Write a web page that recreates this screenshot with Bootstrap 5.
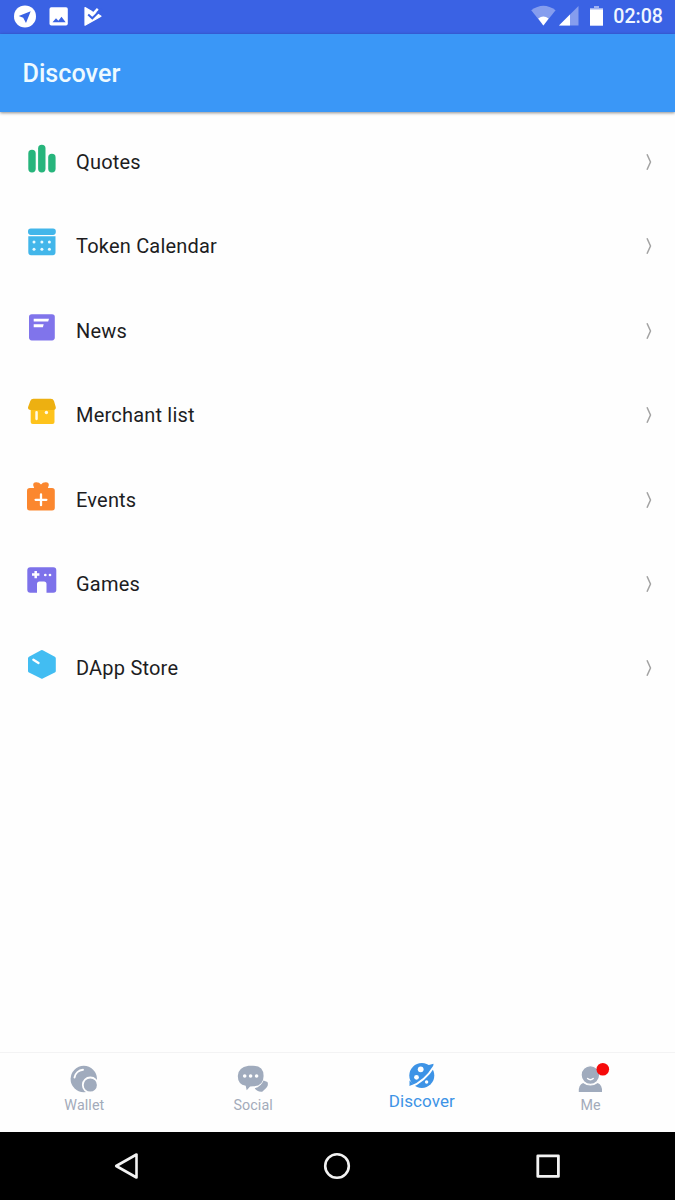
<!DOCTYPE html>
<html lang="en">
<head>
<meta charset="utf-8">
<meta name="viewport" content="width=device-width, initial-scale=1">
<title>Discover</title>
<link href="https://cdn.jsdelivr.net/npm/bootstrap@5.3.0/dist/css/bootstrap.min.css" rel="stylesheet">
<style>
  body { font-family: Roboto, "Liberation Sans", sans-serif; background: #fefefe; height: 1200px; overflow: hidden; }
  svg { display: block; flex: none; }
  .status-bar { height: 34px; background: #3a62e4; color: #fff; }
  .clock { font-size: 19.6px; font-weight: 500; line-height: 36px; margin-left: 9px; color: #f0f6ff; }
  .app-bar { height: 78px; background: #3a97f7; box-shadow: 0 1px 3px rgba(0,0,0,.45); padding: 2px 22.5px 0; }
  .app-bar h1 { font-size: 25.2px; font-weight: 500; color: #eefaff; line-height: 1; }
  .menu-list { padding-top: 7.8px; }
  .menu-row { height: 84.4px; padding: 0 20px 0 24px; gap: 16px; color: #1d1d1f; font-size: 20px; letter-spacing: .2px; text-decoration: none; }
  .tab-bar { height: 80px; border-top: 1px solid #f3f3f4; background: #fefefe; }
  .tab-link { color: #a3abba; font-size: 14.3px; line-height: 16px; padding-top: 10px; text-decoration: none; letter-spacing: .1px; }
  .tab-link.current { color: #3d93e6; font-size: 17px; line-height: 20px; padding-top: 7px; }
  .system-bar { height: 68px; background: #000; padding: 0 22px 0 20px; }
</style>
</head>
<body class="d-flex flex-column">
  <header class="flex-shrink-0">
    <div class="status-bar d-flex align-items-center justify-content-between">
      <svg width="120" height="34" viewBox="0 0 120 34" fill="#fff">
        <circle cx="25" cy="16.4" r="11"/>
        <path d="M30.7 11.3 18.7 16l4.500 1.700 2.800 5.200z" fill="#3a62e4"/>
        <rect x="49.500" y="7.300" width="18.300" height="18.300" rx="1.800"/>
        <path d="M52.500 22.300 56 18.200l2.400 2.500 3.100-4 4.200 5.600z" fill="#3a62e4"/>
        <path d="M85 7.500 91.500 11.200 93.500 13.200 96.500 13.200 101 16.200 85 25.200z" stroke="#fff" stroke-width="1.200" stroke-linejoin="round"/>
        <path d="M88.200 14.600 92.300 18.300 101.600 9" fill="none" stroke="#3a62e4" stroke-width="2"/>
        <path d="M90.200 12.200 92.600 14.400 97.800 8.900" fill="none" stroke="#fff" stroke-width="2.400"/>
      </svg>
      <div class="d-flex" style="padding-right:12px">
        <svg width="74" height="34" viewBox="530 0 74 34" fill="#fff">
          <path d="M531.200 11.200q12.200-9 24.400 0L543.400 26.500z" opacity=".38"/>
          <path d="M538.200 19.500q5.200-3.800 10.400 0l-5.200 7z"/>
          <path d="M578.500 7v19.500H559z" opacity=".38"/><path d="M570 15.500v11H559z"/>
          <path d="M594 7h5v2h4v4h-13V9h4z" opacity=".5"/><path d="M590 10.500h13v16.200h-13z"/>
        </svg>
        <span class="clock">02:08</span>
      </div>
    </div>
    <div class="app-bar d-flex align-items-center"><h1 class="m-0">Discover</h1></div>
  </header>

  <main class="menu-list flex-grow-1">
    <a class="menu-row d-flex align-items-center">
      <svg width="36" height="36" viewBox="0 0 36 36" fill="#27b57c"><rect x="4.300" y="5.700" width="7.400" height="22.700" rx="3.700"/><rect x="14.100" y=".8" width="7.400" height="27.600" rx="3.700"/><rect x="24.200" y="9.800" width="7.400" height="18.600" rx="3.700"/></svg>
      <span class="flex-grow-1">Quotes</span>
      <svg width="12" height="24" viewBox="0 0 12 24" fill="none" stroke="#a2a2a2" stroke-width="1.500"><path d="M4 4.200 7.500 12 4 19.800"/></svg>
    </a>
    <a class="menu-row d-flex align-items-center">
      <svg width="36" height="36" viewBox="0 0 36 36" fill="#42b6ea"><rect x="4" y=".6" width="27.800" height="6.300" rx="2.800"/><path d="M4.300 8.300h27.200v16a3 3 0 0 1-3 3H7.300a3 3 0 0 1-3-3z"/><g fill="#e8faff"><circle cx="10" cy="14" r="1.500"/><circle cx="17.900" cy="14" r="1.500"/><circle cx="25.400" cy="14" r="1.500"/><circle cx="10" cy="21.300" r="1.500"/><circle cx="17.900" cy="21.300" r="1.500"/><circle cx="25.400" cy="21.300" r="1.500"/></g></svg>
      <span class="flex-grow-1">Token Calendar</span>
      <svg width="12" height="24" viewBox="0 0 12 24" fill="none" stroke="#a2a2a2" stroke-width="1.500"><path d="M4 4.200 7.500 12 4 19.800"/></svg>
    </a>
    <a class="menu-row d-flex align-items-center">
      <svg width="36" height="36" viewBox="0 0 36 36" fill="#8074eb"><rect x="5" y="1.200" width="25.800" height="26.200" rx="2.800"/><path d="M9.700 5.700H25l-.8 2.900H9.700zM9.700 11.300h10l-.8 2.900H9.700z" fill="#fff"/></svg>
      <span class="flex-grow-1">News</span>
      <svg width="12" height="24" viewBox="0 0 12 24" fill="none" stroke="#a2a2a2" stroke-width="1.500"><path d="M4 4.200 7.500 12 4 19.800"/></svg>
    </a>
    <a class="menu-row d-flex align-items-center">
      <svg width="36" height="36" viewBox="0 0 36 36" fill="#fec31c"><path d="M6.700 9h23.800v16a2 2 0 0 1-2 2H8.700a2 2 0 0 1-2-2z"/><path d="M9.500 1.800h17.300q2.400 0 3.200 2.200l1.800 6.200q.2 2.600-2.600 2.800H6.800q-3-.2-2.800-2.800L6.300 4q.8-2.200 3.200-2.200z" fill="#edb011"/><rect x="11.300" y="14" width="2.500" height="9.200" rx="1.100" fill="#fffbe8"/><circle cx="22.400" cy="15.500" r="1.700" fill="#fffbe8"/></svg>
      <span class="flex-grow-1">Merchant list</span>
      <svg width="12" height="24" viewBox="0 0 12 24" fill="none" stroke="#a2a2a2" stroke-width="1.500"><path d="M4 4.200 7.500 12 4 19.800"/></svg>
    </a>
    <a class="menu-row d-flex align-items-center">
      <svg width="36" height="36" viewBox="0 0 36 36" fill="#fb872f"><rect x="3" y="6" width="27.800" height="22.500" rx="2.800"/><path d="M10.500 7 9.200 3.200Q9 .2 12 .2q3.200-.2 5 2.300 1.800-2.500 5-2.300 3 0 2.800 3L23.500 7z"/><path d="M17 12.400v10.800M11.600 17.800h10.800" stroke="#fff" stroke-width="2.300" stroke-linecap="round"/></svg>
      <span class="flex-grow-1">Events</span>
      <svg width="12" height="24" viewBox="0 0 12 24" fill="none" stroke="#a2a2a2" stroke-width="1.500"><path d="M4 4.200 7.500 12 4 19.800"/></svg>
    </a>
    <a class="menu-row d-flex align-items-center">
      <svg width="36" height="36" viewBox="0 0 36 36" fill="#7d72ea"><path d="M6.300 1.200h23a3 3 0 0 1 3 3v19.600a3 3 0 0 1-3 3h-6.800V18q0-2.500-2.500-2.500h-4.500Q13 15.500 13 18v8.800H6.300a3 3 0 0 1-3-3V4.200a3 3 0 0 1 3-3z"/><path d="M11.700 4.900v7.400M8 8.600h7.400" stroke="#fff" stroke-width="2.500"/><circle cx="21.300" cy="9" r="1.350" fill="#fff"/><circle cx="26" cy="9" r="1.350" fill="#fff"/></svg>
      <span class="flex-grow-1">Games</span>
      <svg width="12" height="24" viewBox="0 0 12 24" fill="none" stroke="#a2a2a2" stroke-width="1.500"><path d="M4 4.200 7.500 12 4 19.800"/></svg>
    </a>
    <a class="menu-row d-flex align-items-center">
      <svg width="36" height="36" viewBox="0 0 36 36"><path d="M17.900 1.900 30 8.300v12.600L17.900 27 5.800 20.900V8.300z" fill="#42bdf2" stroke="#42bdf2" stroke-width="3.600" stroke-linejoin="round"/><path d="M9.400 9.700l5.100 3.200" stroke="#fff" stroke-width="2.400" stroke-linecap="round"/></svg>
      <span class="flex-grow-1">DApp Store</span>
      <svg width="12" height="24" viewBox="0 0 12 24" fill="none" stroke="#a2a2a2" stroke-width="1.500"><path d="M4 4.200 7.500 12 4 19.800"/></svg>
    </a>
  </main>

  <nav class="tab-bar flex-shrink-0 d-flex">
    <a class="tab-link col-3 d-flex flex-column align-items-center">
      <svg width="34" height="34" viewBox="0 0 34 34" fill="#a0abbd"><circle cx="16.800" cy="16" r="13.200"/><path d="M7.500 14.500A9.500 9.500 0 0 1 16 6.800" fill="none" stroke="#fff" stroke-width="1.900" stroke-linecap="round"/><circle cx="23.300" cy="22" r="7.500" stroke="#fefefe" stroke-width="1.800"/></svg>
      <span>Wallet</span>
    </a>
    <a class="tab-link col-3 d-flex flex-column align-items-center">
      <svg width="34" height="34" viewBox="0 0 34 34" fill="#a0abbd"><path d="M27.500 17.500l4 1.500q1.400 3.500-1.800 6.500l-3.500 3.200q-5 .5-7.500-3.400 6.500-1.800 8.800-7.800z"/><path d="M12.500 2.700h4.600q10.500 0 10.500 10.200T17.100 23.200l-3 .2-3.400 3.800-1-4.500Q1.800 21.500 1.800 13T12.500 2.700z"/><g fill="#fff"><circle cx="8.700" cy="13" r="1.800"/><circle cx="14.600" cy="13" r="1.800"/><circle cx="20.600" cy="13" r="1.800"/></g></svg>
      <span>Social</span>
    </a>
    <a class="tab-link current col-3 d-flex flex-column align-items-center">
      <svg width="34" height="31" viewBox="0 0 34 31" fill="#3d93e6"><circle cx="16.800" cy="15.500" r="12.500"/><path d="M22 5.500 28.500 3.700 28 9.500zM4.500 20.500v5.500l5-1z"/><path d="M5 27Q19.500 22 29.300 6" fill="none" stroke="#fefefe" stroke-width="2"/><g fill="#fff"><circle cx="15.700" cy="9.300" r="2.900"/><circle cx="11.500" cy="17.300" r="2.400"/><circle cx="21.600" cy="22" r="1.700"/></g></svg>
      <span>Discover</span>
    </a>
    <a class="tab-link col-3 d-flex flex-column align-items-center">
      <svg width="40" height="34" viewBox="0 0 40 34" fill="#a0abbd"><path d="M7.800 28.900q-.5-6.800 4.300-8.900 7.300 5 14.600 0 4.800 2.100 4.300 8.900z"/><circle cx="19.400" cy="12" r="9.400" stroke="#fefefe" stroke-width="1.400"/><path d="M16.600 15.500q2.800 2.500 5.600 0" fill="none" stroke="#fff" stroke-width="1.500" stroke-linecap="round"/><circle cx="31.800" cy="6.300" r="6.300" fill="#f60a0a"/></svg>
      <span>Me</span>
    </a>
  </nav>

  <footer class="system-bar flex-shrink-0 d-flex align-items-center justify-content-around">
    <svg width="32" height="32" viewBox="0 0 32 32" fill="none" stroke="#f2f2f2" stroke-width="2.600" stroke-linejoin="round"><path d="M26.500 4.500v23L6.200 16z"/></svg>
    <svg width="32" height="32" viewBox="0 0 32 32" fill="none" stroke="#f2f2f2" stroke-width="2.600"><circle cx="16" cy="16" r="11.800"/></svg>
    <svg width="32" height="32" viewBox="0 0 32 32" fill="none" stroke="#f2f2f2" stroke-width="2.800" stroke-linejoin="round"><rect x="5.800" y="5.800" width="20.600" height="20.600"/></svg>
  </footer>
<script src="https://cdn.jsdelivr.net/npm/bootstrap@5.3.0/dist/js/bootstrap.bundle.min.js"></script>
</body>
</html>
